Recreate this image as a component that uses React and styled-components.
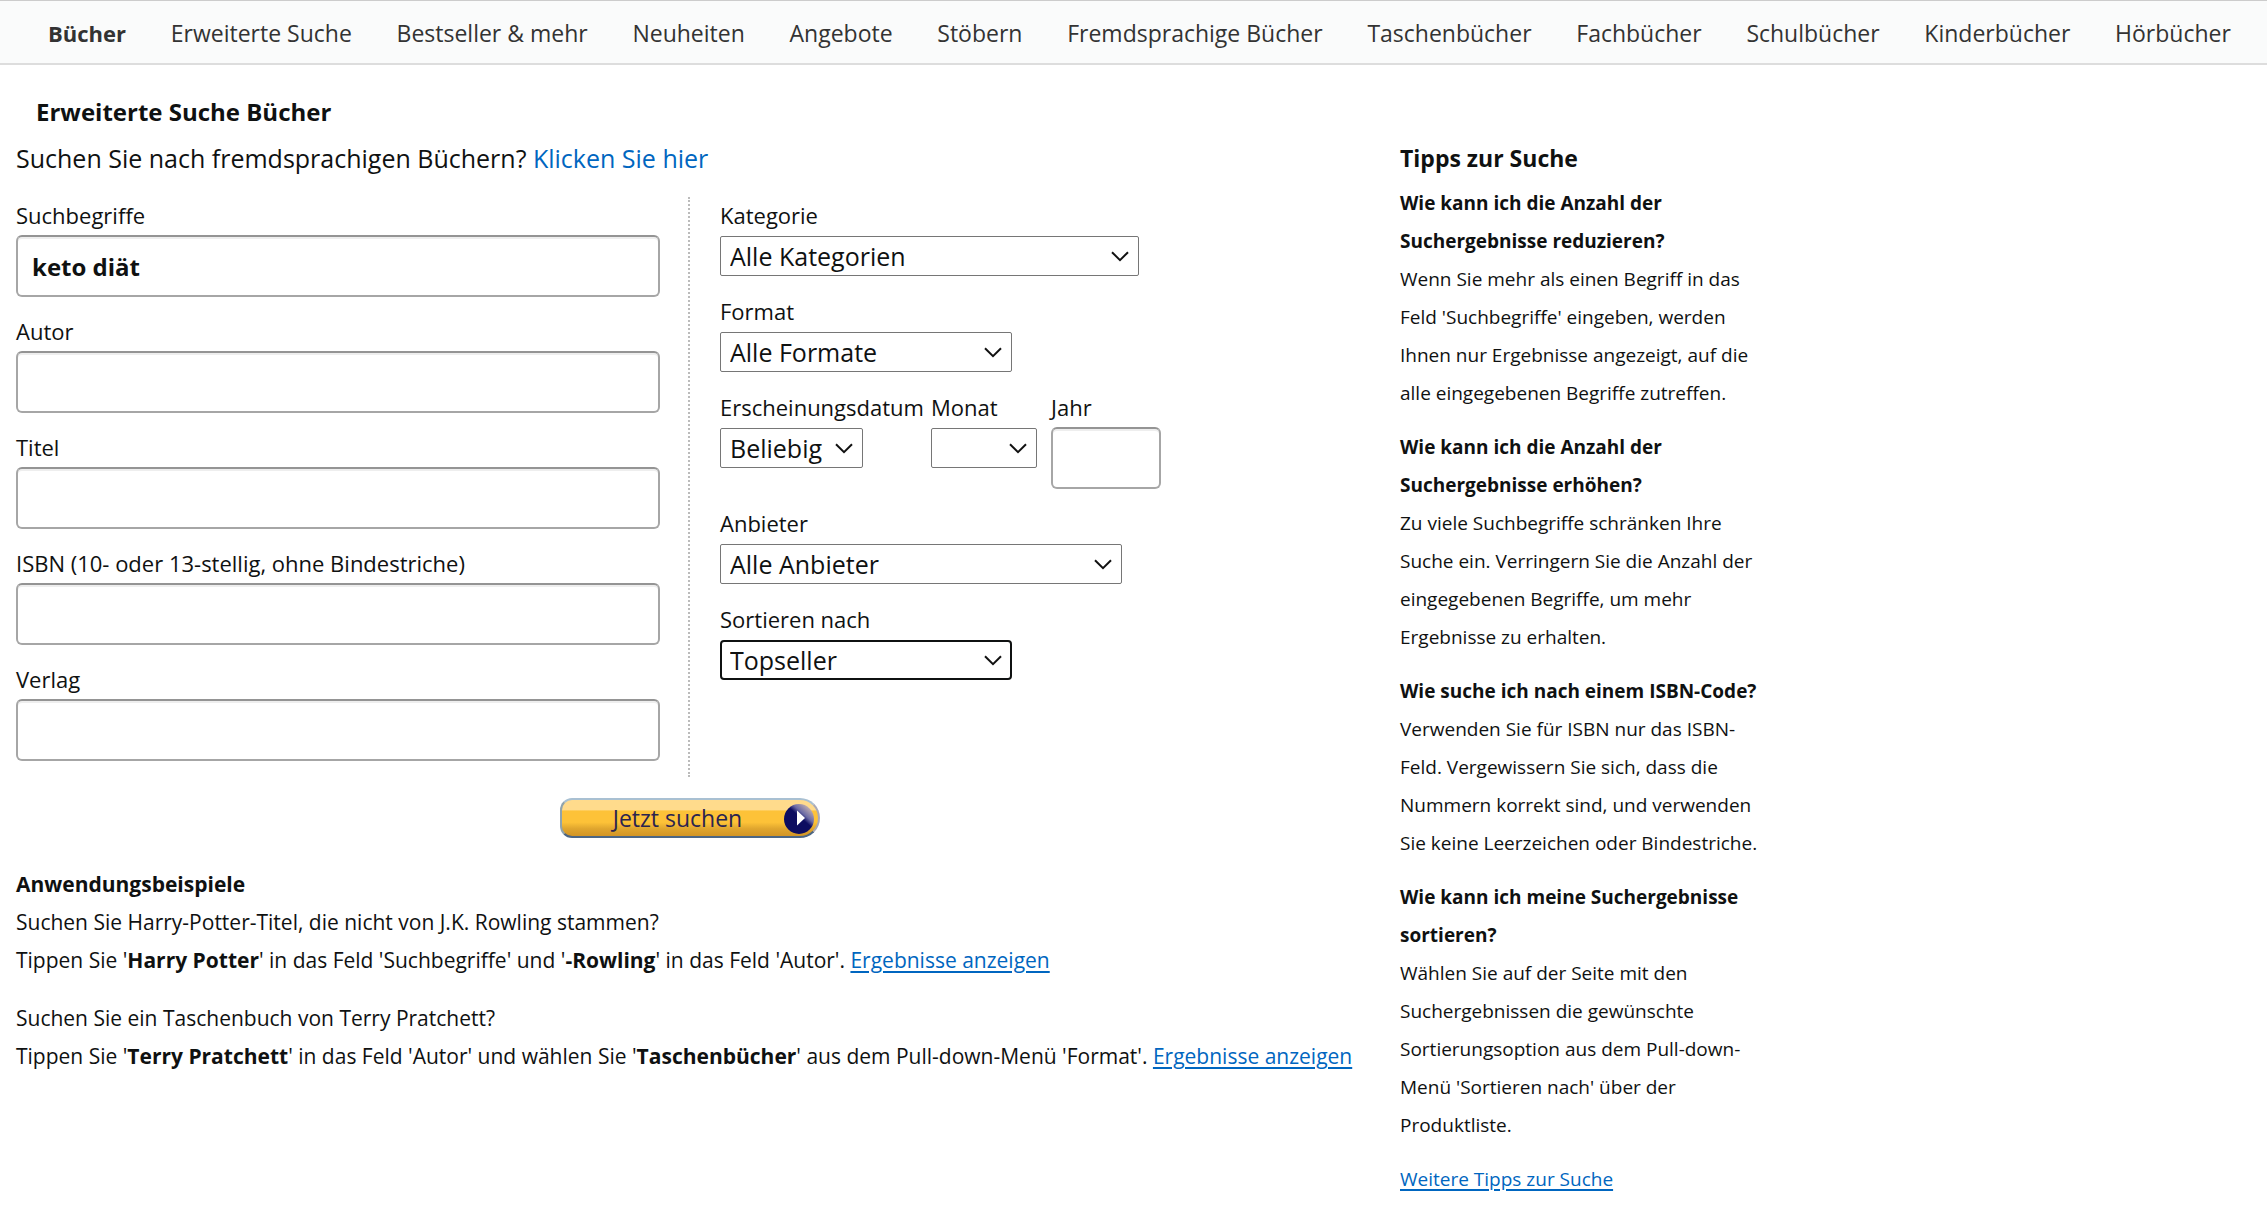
import React from "react";
import styled, { createGlobalStyle, css } from "styled-components";

const GlobalStyle = createGlobalStyle`
  *, *::before, *::after { box-sizing: border-box; }
  body {
    margin: 0;
    background: #fff;
    color: #0f1111;
    font-family: "Open Sans", "Noto Sans", sans-serif;
    font-size: 22px;
    line-height: 38px;
  }
`;

const NavBar = styled.nav`
  border-top: 1px solid #ccc;
  border-bottom: 2px solid #ddd;
  background: #fafbfb;
`;

const NavList = styled.ul`
  display: flex;
  justify-content: space-between;
  gap: 16px;
  margin: 0;
  padding: 13px 36px 11px 48px;
  list-style: none;
`;

const NavLink = styled.a`
  color: #333;
  font-size: ${(p) => (p.$current ? 22 : 23)}px;
  font-weight: ${(p) => (p.$current ? 700 : 400)};
  text-decoration: none;
  white-space: nowrap;
`;

const Page = styled.main`
  padding: 28px 16px 0;
`;

const PageTitle = styled.h1`
  margin: 0 0 8px;
  padding-left: 20px;
  font-size: 24px;
  line-height: 38px;
`;

const Columns = styled.div`
  display: grid;
  grid-template-columns: minmax(0, 1368fr) minmax(0, 851fr);
  column-gap: 16px;
`;

const Intro = styled.p`
  margin: 0 0 20px;
  font-size: 25px;
`;

const Link = styled.a`
  color: #0066c0;
  text-decoration: ${(p) => (p.$plain ? "none" : "underline")};
  text-decoration-thickness: 2px;
  text-underline-offset: 3px;
`;

const SearchForm = styled.form`
  padding-right: 20px;
`;

const FieldColumns = styled.div`
  display: grid;
  grid-template-columns: minmax(0, 1fr) minmax(0, 1fr);
`;

const TextFields = styled.div`
  padding-right: 28px;
  border-right: 2px dotted #bbb;
`;

const SelectFields = styled.div`
  padding-left: 30px;
`;

const Field = styled.div`
  padding-bottom: 16px;
`;

const DateRow = styled.div`
  display: grid;
  grid-template-columns: 211px 120px 110px;
`;

const Label = styled.label`
  display: block;
  padding-bottom: 2px;
  line-height: 36px;
`;

const TextInput = styled.input`
  display: block;
  width: 100%;
  height: 62px;
  padding: 0 14px;
  border: 2px solid #a6a6a6;
  border-top-color: #949494;
  border-radius: 6px;
  background: #fff;
  box-shadow: inset 0 2px 0 rgba(15, 17, 17, 0.07);
  color: #0f1111;
  font: 700 24px "Open Sans", "Noto Sans", sans-serif;
  outline: none;
`;

const SelectBox = styled.div`
  position: relative;
  width: ${(p) => p.$width}px;
  max-width: 100%;
  margin: 1px 0;
`;

const SelectControl = styled.select`
  display: block;
  width: 100%;
  height: 40px;
  padding: 0 28px 0 9px;
  border: 1px solid #767676;
  border-radius: 2px;
  background: #fff;
  color: #0f1111;
  font: 25px "Open Sans", "Noto Sans", sans-serif;
  appearance: none;
  outline: none;
  ${(p) =>
    p.$active &&
    css`
      padding-left: 8px;
      border: 2px solid #0f1111;
      border-radius: 4px;
    `}
`;

const Chevron = styled.svg`
  position: absolute;
  top: 15px;
  right: 10px;
  width: 18px;
  height: 11px;
  pointer-events: none;
`;

const ButtonRow = styled.div`
  display: flex;
  justify-content: center;
  margin: 21px 0 27px;
`;

const SearchButton = styled.button`
  display: flex;
  align-items: center;
  width: 260px;
  height: 40px;
  padding: 0 3px 0 0;
  border: 2px solid;
  border-color: #a9c0d2 #a9a9b8 #4c6684 #8fa3ad;
  border-radius: 12px 20px 20px 12px;
  background: linear-gradient(#ffdb8c 0 28%, #fdc238 30% 62%, #dfa52e 80%, #d39525);
  color: #2b2450;
  font: 500 23px/34px "Open Sans", "Noto Sans", sans-serif;
`;

const ButtonText = styled.span`
  flex: 1;
  padding-left: 10px;
  text-align: center;
`;

const ArrowDisc = styled.svg`
  flex: none;
  width: 32px;
  height: 34px;
`;

const SectionTitle = styled.h2`
  margin: 0 0 ${(p) => p.$gap || 0}px;
  font-size: ${(p) => p.$size}px;
`;

const Example = styled.p`
  margin: 0 0 20px;
  font-size: 21px;
`;

const Tips = styled.aside`
  max-width: 370px;
  font-size: 19px;
`;

const Tip = styled.section`
  margin-bottom: 16px;
`;

const TipTitle = styled.h3`
  margin: 0;
  font-size: 19px;
`;

const TipText = styled.p`
  margin: 0;
`;

const NAV = [
  "Bücher",
  "Erweiterte Suche",
  "Bestseller & mehr",
  "Neuheiten",
  "Angebote",
  "Stöbern",
  "Fremdsprachige Bücher",
  "Taschenbücher",
  "Fachbücher",
  "Schulbücher",
  "Kinderbücher",
  "Hörbücher",
];

const TEXT_FIELDS = [
  { id: "keywords", label: "Suchbegriffe", value: "keto diät" },
  { id: "author", label: "Autor" },
  { id: "title", label: "Titel" },
  { id: "isbn", label: "ISBN (10- oder 13-stellig, ohne Bindestriche)" },
  { id: "publisher", label: "Verlag" },
];

const TIPS = [
  {
    title: "Wie kann ich die Anzahl der Suchergebnisse reduzieren?",
    text: "Wenn Sie mehr als einen Begriff in das Feld 'Suchbegriffe' eingeben, werden Ihnen nur Ergebnisse angezeigt, auf die alle eingegebenen Begriffe zutreffen.",
  },
  {
    title: "Wie kann ich die Anzahl der Suchergebnisse erhöhen?",
    text: "Zu viele Suchbegriffe schränken Ihre Suche ein. Verringern Sie die Anzahl der eingegebenen Begriffe, um mehr Ergebnisse zu erhalten.",
  },
  {
    title: "Wie suche ich nach einem ISBN-Code?",
    text: "Verwenden Sie für ISBN nur das ISBN-Feld. Vergewissern Sie sich, dass die Nummern korrekt sind, und verwenden Sie keine Leerzeichen oder Bindestriche.",
  },
  {
    title: "Wie kann ich meine Suchergebnisse sortieren?",
    text: "Wählen Sie auf der Seite mit den Suchergebnissen die gewünschte Sortierungsoption aus dem Pull-down-Menü 'Sortieren nach' über der Produktliste.",
  },
];

function SelectField({ id, label, option, width, active }) {
  return (
    <Field>
      <Label htmlFor={id}>{label}</Label>
      <SelectBox $width={width}>
        <SelectControl id={id} $active={active} defaultValue={option}>
          <option value={option}>{option}</option>
        </SelectControl>
        <Chevron viewBox="0 0 18 11" aria-hidden="true">
          <path d="M1 1.2 L9 9.2 L17 1.2" fill="none" stroke="#111" strokeWidth="2" />
        </Chevron>
      </SelectBox>
    </Field>
  );
}

export default function App() {
  return (
    <>
      <GlobalStyle />
      <NavBar>
        <NavList>
          {NAV.map((name, i) => (
            <li key={name}>
              <NavLink href="#" $current={i === 0}>
                {name}
              </NavLink>
            </li>
          ))}
        </NavList>
      </NavBar>
      <Page>
        <PageTitle>Erweiterte Suche Bücher</PageTitle>
        <Columns>
          <div>
            <Intro>
              Suchen Sie nach fremdsprachigen Büchern?{" "}
              <Link href="#" $plain>
                Klicken Sie hier
              </Link>
            </Intro>
            <SearchForm onSubmit={(e) => e.preventDefault()}>
              <FieldColumns>
                <TextFields>
                  {TEXT_FIELDS.map((f) => (
                    <Field key={f.id}>
                      <Label htmlFor={f.id}>{f.label}</Label>
                      <TextInput id={f.id} type="text" defaultValue={f.value} />
                    </Field>
                  ))}
                </TextFields>
                <SelectFields>
                  <SelectField id="category" label="Kategorie" option="Alle Kategorien" width={419} />
                  <SelectField id="format" label="Format" option="Alle Formate" width={292} />
                  <DateRow>
                    <SelectField id="date" label="Erscheinungsdatum" option="Beliebig" width={143} />
                    <SelectField id="month" label="Monat" option="" width={106} />
                    <Field>
                      <Label htmlFor="year">Jahr</Label>
                      <TextInput id="year" type="text" />
                    </Field>
                  </DateRow>
                  <SelectField id="seller" label="Anbieter" option="Alle Anbieter" width={402} />
                  <SelectField id="sort" label="Sortieren nach" option="Topseller" width={292} active />
                </SelectFields>
              </FieldColumns>
              <ButtonRow>
                <SearchButton type="submit">
                  <ButtonText>Jetzt suchen</ButtonText>
                  <ArrowDisc viewBox="0 0 32 34" aria-hidden="true">
                    <defs>
                      <linearGradient id="disc" x1="1" y1="0" x2="0.3" y2="0.8">
                        <stop offset="0.1" stopColor="#d9c3b4" />
                        <stop offset="0.45" stopColor="#6a6aa5" />
                        <stop offset="0.6" stopColor="#0d0d60" />
                      </linearGradient>
                    </defs>
                    <circle cx="16" cy="18" r="15" fill="url(#disc)" />
                    <path d="M14 9.5 L22 17 L14 24.5 Z" fill="#fff" />
                  </ArrowDisc>
                </SearchButton>
              </ButtonRow>
            </SearchForm>
            <SectionTitle $size={21}>Anwendungsbeispiele</SectionTitle>
            <Example>
              Suchen Sie Harry-Potter-Titel, die nicht von J.K. Rowling stammen?
              <br />
              Tippen Sie '<b>Harry Potter</b>' in das Feld 'Suchbegriffe' und '<b>-Rowling</b>' in das Feld 'Autor'.{" "}
              <Link href="#">Ergebnisse anzeigen</Link>
            </Example>
            <Example>
              Suchen Sie ein Taschenbuch von Terry Pratchett?
              <br />
              Tippen Sie '<b>Terry Pratchett</b>' in das Feld 'Autor' und wählen Sie '<b>Taschenbücher</b>' aus dem
              Pull-down-Menü 'Format'. <Link href="#">Ergebnisse anzeigen</Link>
            </Example>
          </div>
          <Tips>
            <SectionTitle $size={23} $gap={7}>
              Tipps zur Suche
            </SectionTitle>
            {TIPS.map((tip) => (
              <Tip key={tip.title}>
                <TipTitle>{tip.title}</TipTitle>
                <TipText>{tip.text}</TipText>
              </Tip>
            ))}
            <Link href="#">Weitere Tipps zur Suche</Link>
          </Tips>
        </Columns>
      </Page>
    </>
  );
}
